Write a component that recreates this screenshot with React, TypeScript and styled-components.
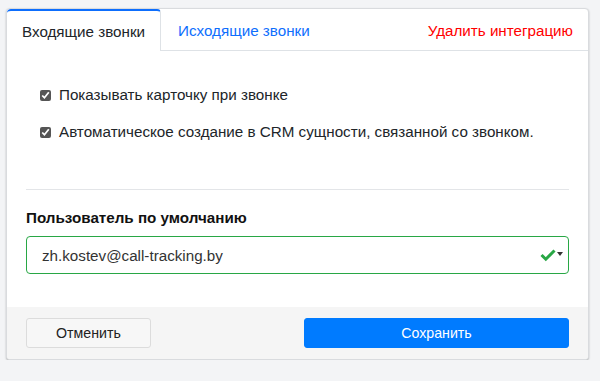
import React from "react";
import styled, { createGlobalStyle } from "styled-components";

const GlobalStyle = createGlobalStyle`
  body {
    margin: 0;
    background: #f3f4f6;
    font-family: "Liberation Sans", Arial, sans-serif;
    color: #212529;
  }
`;

const Page = styled.div`
  padding: 8px 11px 0 6px;
`;

const Card = styled.div`
  background: #fff;
  border: 1px solid #d9dbde;
  border-radius: 4px;
  box-shadow: 0 1px 2px rgba(0, 0, 0, 0.25);
  overflow: hidden;
`;

const TabBar = styled.div`
  display: flex;
  align-items: stretch;
  height: 41px;
  border-bottom: 1px solid #dee2e6;
`;

const Tab = styled.div<{ $active?: boolean }>`
  display: flex;
  align-items: center;
  padding: 0 15px 0 ${(p) => (p.$active ? "15px" : "17px")};
  font-size: 15.2px;
  color: ${(p) => (p.$active ? "#212529" : "#0d6efd")};
  background: #fff;
  margin-bottom: ${(p) => (p.$active ? "-1px" : "0")};
  border-top: 2px solid ${(p) => (p.$active ? "#0d6efd" : "transparent")};
  border-right: 1px solid ${(p) => (p.$active ? "#dee2e6" : "transparent")};
  border-top-left-radius: 4px;
  border-top-right-radius: 4px;
  cursor: pointer;
`;

const DangerTab = styled.div`
  margin-left: auto;
  display: flex;
  align-items: center;
  padding: 2px 15px 0;
  font-size: 15.2px;
  color: #ff0000;
  cursor: pointer;
`;

const Body = styled.div`
  padding: 35px 19px 0;
`;

const CheckList = styled.div`
  display: flex;
  flex-direction: column;
  gap: 19px;
  padding-left: 14px;
  padding-bottom: 48px;
`;

const CheckRow = styled.label`
  display: flex;
  align-items: center;
  gap: 8px;
  font-size: 15.2px;
  color: #212529;
  line-height: 18px;
`;

const Checkbox = styled.input`
  width: 11px;
  height: 11px;
  margin: 0;
  accent-color: #555;
`;

const Divider = styled.hr`
  border: 0;
  border-top: 1px solid #e3e5e8;
  margin: 0;
`;

const FieldLabel = styled.div`
  margin-top: 19px;
  font-size: 15.2px;
  font-weight: bold;
  color: #111;
`;

const SelectBox = styled.div`
  margin-top: 10px;
  height: 36px;
  border: 1px solid #28a745;
  border-radius: 4px;
  display: flex;
  align-items: center;
  padding: 0 5px 0 15px;
  font-size: 15.2px;
  color: #333;
`;

const SelectValue = styled.span`
  flex: 1;
`;

const Caret = styled.span`
  width: 0;
  height: 0;
  border-left: 3px solid transparent;
  border-right: 3px solid transparent;
  border-top: 4px solid #333;
  margin-left: 1px;
  margin-bottom: 2px;
`;

const Footer = styled.div`
  margin-top: 33px;
  background: #f5f5f5;
  padding: 11px 19px 11px;
  display: flex;
  justify-content: space-between;
`;

const Button = styled.button<{ $primary?: boolean }>`
  height: 30px;
  width: ${(p) => (p.$primary ? "265px" : "125px")};
  border-radius: 3px;
  font-family: inherit;
  font-size: 14.2px;
  cursor: pointer;
  border: 1px solid ${(p) => (p.$primary ? "#007bff" : "#dcdcdc")};
  background: ${(p) => (p.$primary ? "#007bff" : "#f7f7f7")};
  color: ${(p) => (p.$primary ? "#fff" : "#222")};
`;

const CheckIcon = () => (
  <svg width="16" height="14" viewBox="0 0 16 14">
    <path d="M1.5 7 L5.8 11.2 L14.5 2.5" fill="none" stroke="#28a745" strokeWidth="3" />
  </svg>
);

export default function App() {
  return (
    <>
      <GlobalStyle />
      <Page>
        <Card>
          <TabBar>
            <Tab $active>Входящие звонки</Tab>
            <Tab>Исходящие звонки</Tab>
            <DangerTab>Удалить интеграцию</DangerTab>
          </TabBar>
          <Body>
            <CheckList>
              <CheckRow>
                <Checkbox type="checkbox" defaultChecked />
                Показывать карточку при звонке
              </CheckRow>
              <CheckRow>
                <Checkbox type="checkbox" defaultChecked />
                Автоматическое создание в CRM сущности, связанной со звонком.
              </CheckRow>
            </CheckList>
            <Divider />
            <FieldLabel>Пользователь по умолчанию</FieldLabel>
            <SelectBox>
              <SelectValue>zh.kostev@call-tracking.by</SelectValue>
              <CheckIcon />
              <Caret />
            </SelectBox>
          </Body>
          <Footer>
            <Button>Отменить</Button>
            <Button $primary>Сохранить</Button>
          </Footer>
        </Card>
      </Page>
    </>
  );
}
